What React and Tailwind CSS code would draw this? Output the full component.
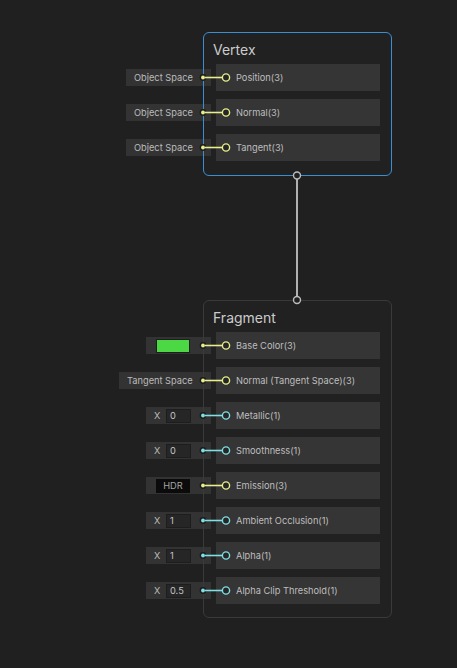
import React from "react";

const YEL = "#e8ee8c";
const CYA = "#7fdfe3";

function Port({ color }) {
  return (
    <svg className="absolute left-[-16px] top-0 z-20 overflow-visible" width="30" height="27">
      <circle cx="3" cy="13.5" r="3.4" fill="#1c1c1c" />
      <circle cx="3" cy="13.5" r="1.9" fill={color} />
      <line x1="5" y1="13.5" x2="22.5" y2="13.5" stroke={color} strokeWidth="1.6" />
      <circle cx="26" cy="13.5" r="3.6" fill="#262626" stroke={color} strokeWidth="1.4" />
    </svg>
  );
}

function Field({ kind, text, width }) {
  const base =
    "absolute right-[calc(100%+5px)] top-[5px] h-[17px] bg-[#333333] flex items-center text-[9.25px] text-[#bcbcbc]";
  if (kind === "text") {
    return (
      <div className={base + " justify-start pl-[8px]"} style={{ width }}>
        {text}
      </div>
    );
  }
  if (kind === "color") {
    return (
      <div className={base + " w-[65px] pl-[10px]"}>
        <div className="w-[34px] h-[14px] bg-[#4cd845] border border-[#1e1e1e]" />
      </div>
    );
  }
  if (kind === "hdr") {
    return (
      <div className={base + " w-[65px] pl-[10px]"}>
        <div className="w-[34px] h-[14px] bg-[#0b0b0b] flex items-center justify-center text-[#a6a6a6]">
          HDR
        </div>
      </div>
    );
  }
  return (
    <div className={base + " w-[65px] pl-[8px]"}>
      <span className="w-[12px] text-[#bdbdbd]">X</span>
      <div className="w-[25px] h-[14px] bg-[#262626] border border-[#1d1d1d] flex items-center pl-[3px] text-[#c4c4c4]">
        {text}
      </div>
    </div>
  );
}

function Slot({ label, color, field }) {
  return (
    <div className="relative h-[27px] bg-[#353535] flex items-center pl-[20px] text-[9.25px] text-[#bebebe] whitespace-nowrap">
      {field && <Field {...field} />}
      <Port color={color} />
      <span className="relative">{label}</span>
    </div>
  );
}

function Node({ title, top, height, borderCls, slots }) {
  return (
    <div
      className="absolute left-[203px] w-[189px] rounded-[6px] bg-[#212121] pt-[1px]"
      style={{ top, height }}
    >
      <div className="h-[31px] flex items-center pl-[10px] pt-[1px] text-[14px] text-[#cbcbcb]">{title}</div>
      <div className="flex flex-col gap-[8px] pl-[13px] pr-[12px]">
        {slots.map((s, i) => (
          <Slot key={i} {...s} />
        ))}
      </div>
      <div className={"absolute inset-0 rounded-[6px] border z-10 pointer-events-none " + borderCls} />
    </div>
  );
}

export default function App() {
  const vertex = [
    { label: "Position(3)", color: YEL, field: { kind: "text", text: "Object Space", width: 85 } },
    { label: "Normal(3)", color: YEL, field: { kind: "text", text: "Object Space", width: 85 } },
    { label: "Tangent(3)", color: YEL, field: { kind: "text", text: "Object Space", width: 85 } },
  ];
  const fragment = [
    { label: "Base Color(3)", color: YEL, field: { kind: "color" } },
    { label: "Normal (Tangent Space)(3)", color: YEL, field: { kind: "text", text: "Tangent Space", width: 92 } },
    { label: "Metallic(1)", color: CYA, field: { kind: "x", text: "0" } },
    { label: "Smoothness(1)", color: CYA, field: { kind: "x", text: "0" } },
    { label: "Emission(3)", color: YEL, field: { kind: "hdr" } },
    { label: "Ambient Occlusion(1)", color: CYA, field: { kind: "x", text: "1" } },
    { label: "Alpha(1)", color: CYA, field: { kind: "x", text: "1" } },
    { label: "Alpha Clip Threshold(1)", color: CYA, field: { kind: "x", text: "0.5" } },
  ];
  return (
    <div
      className="relative w-[457px] h-[668px] bg-[#202020] overflow-hidden"
      style={{ fontFamily: "Inter, 'Noto Sans', sans-serif" }}
    >
      <Node title="Vertex" top={32} height={144} borderCls="border-[#3a8fd4]" slots={vertex} />
      <Node title="Fragment" top={300} height={318} borderCls="border-[#3a3a3a]" slots={fragment} />
      <svg className="absolute left-0 top-0 z-30 pointer-events-none" width="457" height="668">
        <line x1="297" y1="179" x2="297" y2="296.5" stroke="#b0b0b0" strokeWidth="2" />
        <circle cx="297" cy="175.5" r="3.5" fill="#202020" stroke="#bdbdbd" strokeWidth="1.4" />
        <circle cx="297" cy="300" r="3.5" fill="#202020" stroke="#bdbdbd" strokeWidth="1.4" />
      </svg>
    </div>
  );
}
